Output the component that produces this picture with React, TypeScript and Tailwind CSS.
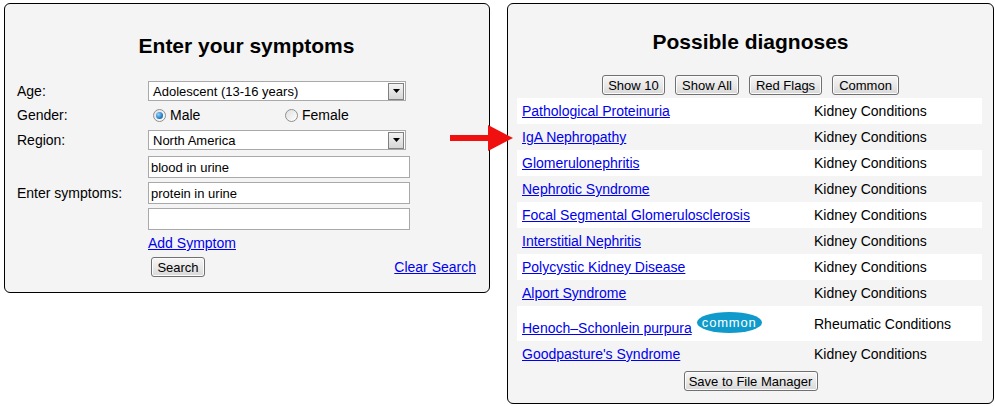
import React from 'react';

const font = { fontFamily: '"Liberation Sans", Arial, sans-serif' };

interface Diagnosis {
    name: string;
    category: string;
    common?: boolean;
}

const diagnoses: Diagnosis[] = [
    { name: 'Pathological Proteinuria', category: 'Kidney Conditions' },
    { name: 'IgA Nephropathy', category: 'Kidney Conditions' },
    { name: 'Glomerulonephritis', category: 'Kidney Conditions' },
    { name: 'Nephrotic Syndrome', category: 'Kidney Conditions' },
    { name: 'Focal Segmental Glomerulosclerosis', category: 'Kidney Conditions' },
    { name: 'Interstitial Nephritis', category: 'Kidney Conditions' },
    { name: 'Polycystic Kidney Disease', category: 'Kidney Conditions' },
    { name: 'Alport Syndrome', category: 'Kidney Conditions' },
    { name: 'Henoch–Schonlein purpura', category: 'Rheumatic Conditions', common: true },
    { name: "Goodpasture's Syndrome", category: 'Kidney Conditions' },
];

// Old-school gray push button
const Button: React.FC<{ label: string; className?: string }> = ({ label, className = '' }) => (
    <button
        className={`h-[20px] rounded-[3px] border border-[#707070] bg-gradient-to-b from-[#f6f6f6] via-[#e9e9e9] to-[#d8d8d8] text-[13px] leading-none text-black shadow-[inset_0_0_0_1px_#fcfcfc] ${className}`}
    >
        {label}
    </button>
);

const FakeSelect: React.FC<{ value: string }> = ({ value }) => (
    <div className="flex h-[20px] w-[258px] items-center border border-[#a9a9a9] bg-white pl-[4px] pr-[1px]">
        <span className="flex-1 text-[13px] leading-none text-black">{value}</span>
        <div className="flex h-[17px] w-[16px] items-center justify-center border border-[#808080] bg-gradient-to-b from-[#f4f4f4] to-[#d6d6d6]">
            <svg width="7" height="4" viewBox="0 0 7 4">
                <path d="M0 0h7L3.5 4z" fill="#000" />
            </svg>
        </div>
    </div>
);

const Radio: React.FC<{ checked?: boolean; label: string }> = ({ checked, label }) => (
    <div className="flex items-center gap-[4px]">
        <span className="flex h-[13px] w-[13px] items-center justify-center rounded-full border border-[#8e8f8f] bg-gradient-to-br from-[#e0e0e0] to-[#ffffff]">
            {checked && <span className="h-[7px] w-[7px] rounded-full bg-[radial-gradient(circle_at_35%_35%,#8fd3ff,#1a6fb5_70%,#0b3f7a)]" />}
        </span>
        <span className="text-[14px] leading-none text-black">{label}</span>
    </div>
);

const TextInput: React.FC<{ value?: string }> = ({ value = '' }) => (
    <div className="flex h-[22px] w-[262px] items-center border border-[#a9a9a9] bg-white pl-[2px] text-[13px] leading-none text-black">
        {value}
    </div>
);

const Row: React.FC<{ label?: string; className?: string; children: React.ReactNode }> = ({ label, className = '', children }) => (
    <div className={`flex items-center ${className}`}>
        <div className="w-[131px] text-[14px] leading-none text-black">{label}</div>
        {children}
    </div>
);

export default function App() {
    return (
        <div className="relative flex min-h-[406px] w-[995px] items-start gap-[17px] bg-white pl-[4px] pt-[3px]" style={font}>
            {/* Left panel: symptom form */}
            <div className="flex h-[290px] w-[486px] flex-col rounded-[6px] border border-black bg-[#f4f4f4] pl-[12px] pr-[13px] pt-[30px]">
                <h2 className="text-center text-[21px] font-bold leading-[24px] text-black">Enter your symptoms</h2>

                <Row label="Age:" className="mt-[23px]">
                    <FakeSelect value="Adolescent (13-16 years)" />
                </Row>
                <Row label="Gender:" className="mt-[4px] h-[20px]">
                    <div className="flex w-[258px] pl-[5px]">
                        <div className="w-[132px]">
                            <Radio checked label="Male" />
                        </div>
                        <Radio label="Female" />
                    </div>
                </Row>
                <Row label="Region:" className="mt-[5px]">
                    <FakeSelect value="North America" />
                </Row>
                <Row className="mt-[6px]">
                    <TextInput value="blood in urine" />
                </Row>
                <Row label="Enter symptoms:" className="mt-[4px]">
                    <TextInput value="protein in urine" />
                </Row>
                <Row className="mt-[4px]">
                    <TextInput />
                </Row>
                <Row className="mt-[4px] h-[18px]">
                    <a href="#" className="text-[14px] leading-none text-[#0000ee] underline">Add Symptom</a>
                </Row>
                <Row className="mt-[5px]">
                    <div className="flex flex-1 items-center justify-between">
                        <Button label="Search" className="ml-[3px] w-[54px]" />
                        <a href="#" className="text-[14px] leading-none text-[#0000ee] underline">Clear Search</a>
                    </div>
                </Row>
            </div>

            {/* Right panel: results */}
            <div className="flex h-[401px] w-[487px] flex-col rounded-[6px] border border-black bg-[#f4f4f4] px-[9px] pt-[26px]">
                <h2 className="text-center text-[21px] font-bold leading-[24px] text-black">Possible diagnoses</h2>

                <div className="mt-[21px] flex justify-center gap-[10px]">
                    <Button label="Show 10" className="w-[63px]" />
                    <Button label="Show All" className="w-[64px]" />
                    <Button label="Red Flags" className="w-[73px]" />
                    <Button label="Common" className="w-[67px]" />
                </div>

                <div className="mt-[3px] flex w-[465px] flex-col">
                    {diagnoses.map((d, i) => (
                        <div
                            key={d.name}
                            className={`flex ${d.common ? 'h-[35px]' : 'h-[26px]'} ${i % 2 === 0 ? 'bg-white' : ''}`}
                        >
                            <div className={`flex w-[297px] pl-[5px] ${d.common ? 'items-start' : 'items-center'}`}>
                                <a
                                    href="#"
                                    className={`text-[14px] leading-[16px] text-[#0000ee] underline ${d.common ? 'mt-[14px]' : ''}`}
                                >
                                    {d.name}
                                </a>
                                {d.common && (
                                    <span className="ml-[5px] mt-[6px] flex h-[21px] w-[65px] items-center justify-center rounded-[50%] bg-[#0f9acb] text-[13px] font-normal leading-none tracking-[0.8px] text-white">
                                        common
                                    </span>
                                )}
                            </div>
                            <div className="flex flex-1 items-center text-[14px] leading-none text-black">{d.category}</div>
                        </div>
                    ))}
                </div>

                <div className="mt-[4px] flex justify-center">
                    <Button label="Save to File Manager" className="h-[19px] w-[134px]" />
                </div>
            </div>

            {/* Red pointer arrow over the gap */}
            <svg className="absolute left-[450px] top-[125px]" width="64" height="26" viewBox="0 0 64 26">
                <rect x="0" y="10" width="40" height="6" fill="#f01010" />
                <path d="M38 0 L63 13 L38 26 Z" fill="#f01010" />
            </svg>
        </div>
    );
}
